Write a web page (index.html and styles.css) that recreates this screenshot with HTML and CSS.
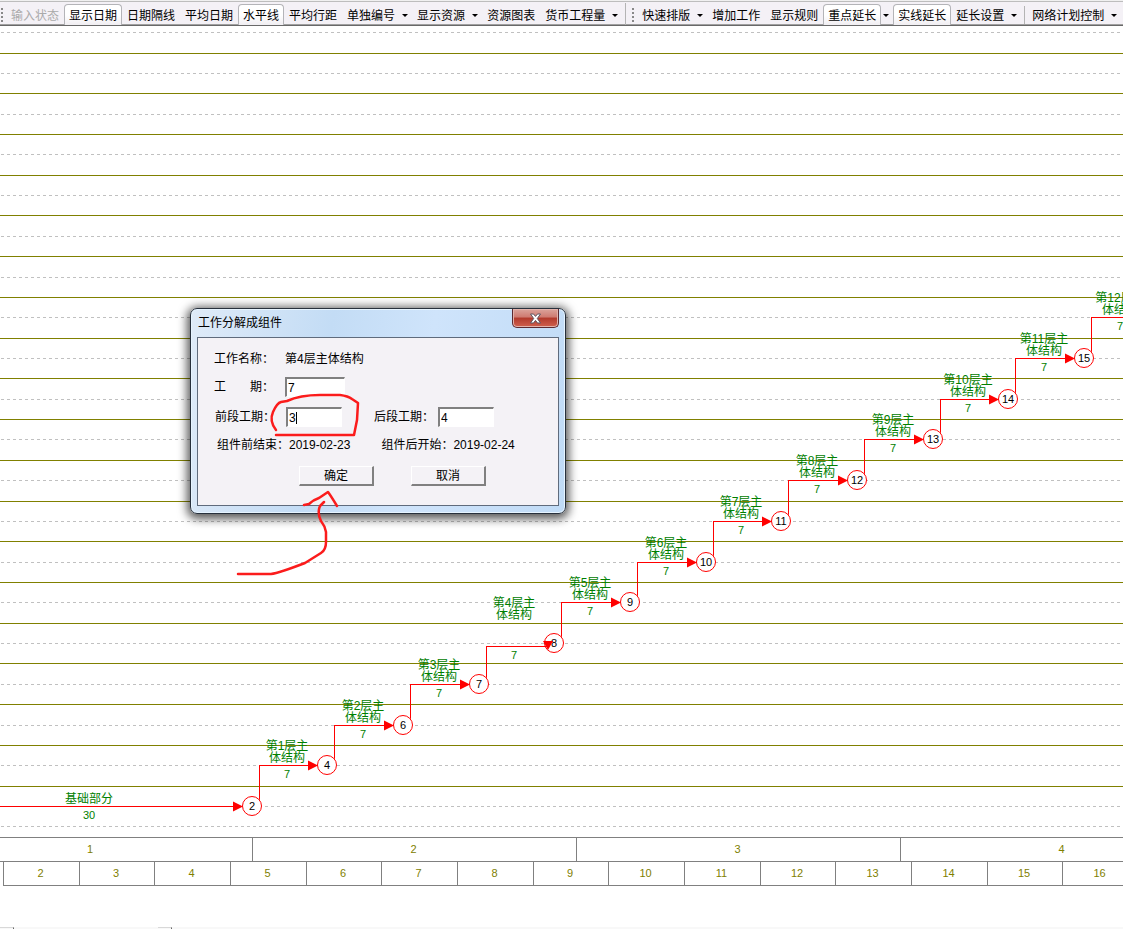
FILE: index.html
```html
<!DOCTYPE html>
<html lang="zh-CN">
<head>
<meta charset="utf-8">
<title>网络计划</title>
<link rel="stylesheet" href="styles.css">
</head>
<body>
<header class="toolbar">
  <span class="grip"></span>
  <button class="tool" disabled>输入状态</button>
  <button class="tool checked">显示日期</button>
  <button class="tool">日期隔线</button>
  <button class="tool">平均日期</button>
  <button class="tool checked">水平线</button>
  <button class="tool">平均行距</button>
  <button class="tool">单独编号</button><button class="drop" aria-label="单独编号选项"></button>
  <button class="tool">显示资源</button><button class="drop" aria-label="显示资源选项"></button>
  <button class="tool">资源图表</button>
  <button class="tool">货币工程量</button><button class="drop" aria-label="货币工程量选项"></button>
  <span class="divider full"></span>
  <span class="grip second"></span>
  <button class="tool">快速排版</button><button class="drop" aria-label="快速排版选项"></button>
  <button class="tool">增加工作</button>
  <button class="tool">显示规则</button>
  <button class="tool checked">重点延长</button><button class="drop" aria-label="重点延长选项"></button>
  <button class="tool checked">实线延长</button>
  <button class="tool">延长设置</button><button class="drop" aria-label="延长设置选项"></button>
  <span class="divider"></span>
  <button class="tool">网络计划控制</button><button class="drop" aria-label="网络计划控制选项"></button>
</header>

<main class="stage">
  <svg class="chart" id="chart"></svg>

  <form class="dialog" role="dialog" aria-labelledby="dialog-title">
    <div class="titlebar">
      <h1 class="title" id="dialog-title">工作分解成组件</h1>
      <button type="button" class="close" aria-label="关闭">
        <svg width="13" height="11" viewBox="0 0 13 11"><path d="M1.500 1h3l2 2.400L8.500 1h3L8.300 5.500l3.200 4.500h-3l-2-2.600L4.500 10h-3l3.200-4.500z" fill="#fff" stroke="#5c5560" stroke-width="1"/></svg>
      </button>
    </div>
    <div class="client">
      <div class="row"><span class="label">工作名称：</span><span>第4层主体结构</span></div>
      <div class="row"><label class="label" for="total">工　　期：</label><input class="field wide" id="total" value="7"></div>
      <div class="row split">
        <label class="label" for="front">前段工期：</label><span class="field"><input class="bare" id="front" value="3"><span class="caret"></span></span>
        <label class="label back" for="back">后段工期：</label><input class="field" id="back" value="4">
      </div>
      <div class="row dates"><span>组件前结束：2019-02-23</span><span>组件后开始：2019-02-24</span></div>
      <div class="actions"><button type="button" class="push">确定</button><button type="button" class="push">取消</button></div>
    </div>
  </form>

  <svg class="marks" width="130" height="190" viewBox="233 390 130 190" aria-hidden="true">
    <path d="M276 430Q269 421 273 412Q277 403 281 402L287 401Q300 395 320 395H340Q348 396 352 399L358 403L357 420L354 435H276"/>
    <path d="M238 574H271Q279 573 305 563L321 553Q326 550 326 542V532Q325 526 321 521Q317 513 320 506L324 502"/>
    <path d="M304 505L309 504Q313 500 319 498L328 492Q331 496 337 506"/>
  </svg>
</main>

<section class="axis">
  <div class="scale months" id="months"></div>
  <div class="scale weeks" id="weeks"></div>
</section>
<footer class="tabs"><span class="tab first"></span><span class="tab"></span></footer>
<script src="chart.js"></script>
</body>
</html>
```
FILE: styles.css
```css
* { box-sizing: border-box; }

body {
  margin: 0;
  min-height: 100vh;
  display: flex;
  flex-direction: column;
  overflow: hidden;
  background: #fff;
  color: #000;
  font: 12px/16px "Liberation Sans", "Noto Sans CJK SC", sans-serif;
}

button, input { font: inherit; color: inherit; }

/* Toolbar */
.toolbar {
  display: flex;
  flex: none;
  height: 26px;
  padding-top: 3px;
  overflow: hidden;
  white-space: nowrap;
  background: linear-gradient(#f0f0f0 1px, #bdbdbd 1px, #bdbdbd 2px, #f4f1f6 2px);
  border-bottom: 1px solid #696969;
  box-shadow: inset 0 -1px #a0a0a0;
}

.tool {
  flex: none;
  height: 21px;
  margin-top: 1px;
  padding: 2px 4px 0;
  border: 1px solid transparent;
  border-bottom: 0;
  border-radius: 4px 4px 0 0;
  background: none;
}

.tool:disabled { color: #aaa; }

.tool.checked {
  border-color: #b4b4b8;
  background: linear-gradient(#fff 50%, #f0eef2);
}

.drop {
  flex: none;
  display: flex;
  align-items: center;
  width: 12px;
  padding: 3px 0 0 2px;
  border: 0;
  background: none;
}

.drop::before {
  content: "";
  border: 3px solid transparent;
  border-top-color: #000;
  border-bottom: 0;
}

.grip {
  flex: none;
  width: 2px;
  height: 14px;
  margin: 5px 3px 0 1px;
  background: repeating-linear-gradient(#888 0 2px, transparent 2px 4px);
}

.grip.second { margin: 5px 3px 0 4px; }

.divider {
  flex: none;
  width: 1px;
  height: 18px;
  margin: 3px 2px 0 3px;
  background: #b4b4b4;
}

.divider.full { height: 22px; margin-top: 0; }

/* Network chart */
.stage { position: relative; flex: none; }

.chart { display: block; width: 100%; height: 811px; }

.chart text { text-anchor: middle; }
.line { stroke: #808000; shape-rendering: crispEdges; }
.dash { stroke: #c0c0c0; stroke-dasharray: 3 3; shape-rendering: crispEdges; }
.link { fill: none; stroke: #f00; shape-rendering: crispEdges; }
.head { fill: #f00; }
.node { fill: #fff; stroke: #f00; }
.task { fill: #008000; }
.num { font-size: 11px; }

.marks {
  position: absolute;
  left: 233px;
  top: 364px;
  fill: none;
  stroke: #fb1c1c;
  stroke-width: 2.500;
  stroke-linecap: round;
  stroke-linejoin: round;
  pointer-events: none;
}

/* Dialog */
.dialog {
  position: absolute;
  left: 190px;
  top: 282px;
  width: 376px;
  padding: 0 6px 7px;
  border: 1px solid #27303c;
  border-radius: 7px;
  background: linear-gradient(100deg, #dfebf8, #c3dcf5 35%, #cfe4fb 60%, #c0dbf6);
  box-shadow: inset 0 0 0 1px #e6f4ff, 0 2px 10px 3px rgba(0, 0, 0, .65);
}

.titlebar { display: flex; justify-content: space-between; height: 28px; }

.title { margin: 6px 0 0 1px; font-size: 12px; font-weight: 400; line-height: 16px; }

.close {
  display: flex;
  align-items: center;
  justify-content: center;
  width: 47px;
  height: 19px;
  padding: 0;
  border: 1px solid #5c2a30;
  border-top: 0;
  border-radius: 0 0 5px 5px;
  background: linear-gradient(#dba49c, #cf7a70 45%, #b23a2c 50%, #d0604e);
  box-shadow: inset 0 0 0 1px #e2b2ab;
}

.client {
  padding: 11px 16px 19px;
  border: 1px solid #5f6b7c;
  background: #f4f2f6;
}

.row { display: flex; align-items: center; height: 20px; margin-bottom: 8px; }
.row + .row { margin-bottom: 10px; }
.row.split { padding-left: 1px; }
.label { width: 71px; }
.label.back { width: 64px; margin-left: 32px; }

.field {
  display: flex;
  align-items: center;
  width: 56px;
  height: 20px;
  padding: 0 0 0 1px;
  border: 1px solid #fff;
  border-top: 2px solid #808080;
  border-left: 2px solid #808080;
  border-radius: 0;
  background: #fff;
}

.field.wide { width: 60px; }

.bare { width: 7px; padding: 0; border: 0; background: none; outline: 0; }
.caret { width: 1px; height: 12px; background: #000; }

.row.dates { gap: 31px; height: 16px; padding-left: 3px; }

.actions { display: flex; gap: 37px; padding: 3px 0 0 85px; }

.push {
  width: 75px;
  height: 20px;
  padding: 0;
  border: 1px solid #fff;
  border-right: 2px solid #808080;
  border-bottom: 2px solid #808080;
  background: #f4f2f6;
}

/* Time axis */
.axis {
  overflow: hidden;
  flex: none;
  border-top: 1px solid #808080;
  color: #808000;
  font-size: 11px;
}

.scale { display: grid; height: 24px; border-bottom: 1px solid #808080; }
.months { grid-template-columns: 252px repeat(3, 324px); }
.months .cell:first-child { padding-right: 74px; margin-left: -1px; }
.months .cell:first-child { text-indent: 2px; }
.weeks { grid-template-columns: repeat(5, 76px 75px 76px); margin-left: 3px; }
.cell { padding-right: 2px; line-height: 23px; text-align: center; border-left: 1px solid #808080; }

/* Bottom tab strip */
.tabs {
  display: flex;
  gap: 144px;
  height: 2px;
  margin-top: auto;
  background: #f8f8f8;
}

.tab { width: 14px; border-top: 1px solid #d8d8d8; border-right: 1px solid #696969; }
```
FILE: chart.js
```js
const rows = [317, 358, 399, 439, 480, 521, 562, 602, 643, 684, 725, 765, 806];
const lines = [53, 93, 134, 175, 215, 256, 297, 338, 378, 419, 460, 501, 541, 582, 623, 663, 704, 745, 786];
const dashes = [32, 73, 114, 154, 195, 236, 277, ...rows, 826];
const nodes = [
  [252, 806, 2], [327, 765, 4], [403, 725, 6], [479, 684, 7], [554, 643, 8],
  [630, 602, 9], [706, 562, 10], [781, 521, 11], [857, 480, 12], [933, 439, 13],
  [1008, 399, 14], [1084, 358, 15], [1160, 317, 0]
];

const text = (x, y, cls, value) => `<text class="${cls}" x="${x}" y="${y + 4}">${value}</text>`;
const rightHead = (x, y) => `<path class="head" d="M${x - 19} ${y - 4.5}L${x - 9} ${y + 0.5}L${x - 19} ${y + 5.5}z"/>`;

let out = '<g transform="translate(0 -26)">';
dashes.forEach(y => { out += `<line class="dash" x1="1" x2="100%" y1="${y + 0.5}" y2="${y + 0.5}"/>`; });
lines.forEach(y => { out += `<line class="line" x1="0" x2="100%" y1="${y + 0.5}" y2="${y + 0.5}"/>`; });

out += '<path class="link" d="M0 806.5H240"/>' + rightHead(252, 806);
out += text(89, 799, 'task', '基础部分') + text(89, 815, 'task num', '30');

nodes.slice(1).forEach(([x, y, id], i) => {
  const [px, py] = nodes[i];
  const bent = id === 8;
  const lineY = bent ? y + 3 : y;
  const labelY = bent ? y - 40 : y - 19;
  out += `<path class="link" d="M${px + 7.5} ${py - 6}V${lineY + 0.5}H${x - 7}"/>`;
  if (!bent) out += rightHead(x, y);
  out += text(x - 40, labelY, 'task', `第${i + 1}层主`);
  out += text(x - 40, labelY + 12, 'task', '体结构');
  out += text(x - 40, lineY + 9, 'task num', '7');
});

nodes.filter(n => n[2]).forEach(([x, y, id]) => {
  out += `<circle class="node" cx="${x}" cy="${y}" r="9.5"/>`;
  out += text(x, y, 'num', id);
  if (id === 8) out += `<path class="link" d="M${x - 10} 646.5h4"/><path class="head" d="M${x - 11} 641h10l-5 9z"/>`;
});
document.getElementById('chart').innerHTML = out + '</g>';

const cells = (from, count) =>
  Array.from({ length: count }, (_, i) => `<div class="cell">${from + i}</div>`).join('');
document.getElementById('months').innerHTML = cells(1, 4);
document.getElementById('weeks').innerHTML = cells(2, 15);
```
